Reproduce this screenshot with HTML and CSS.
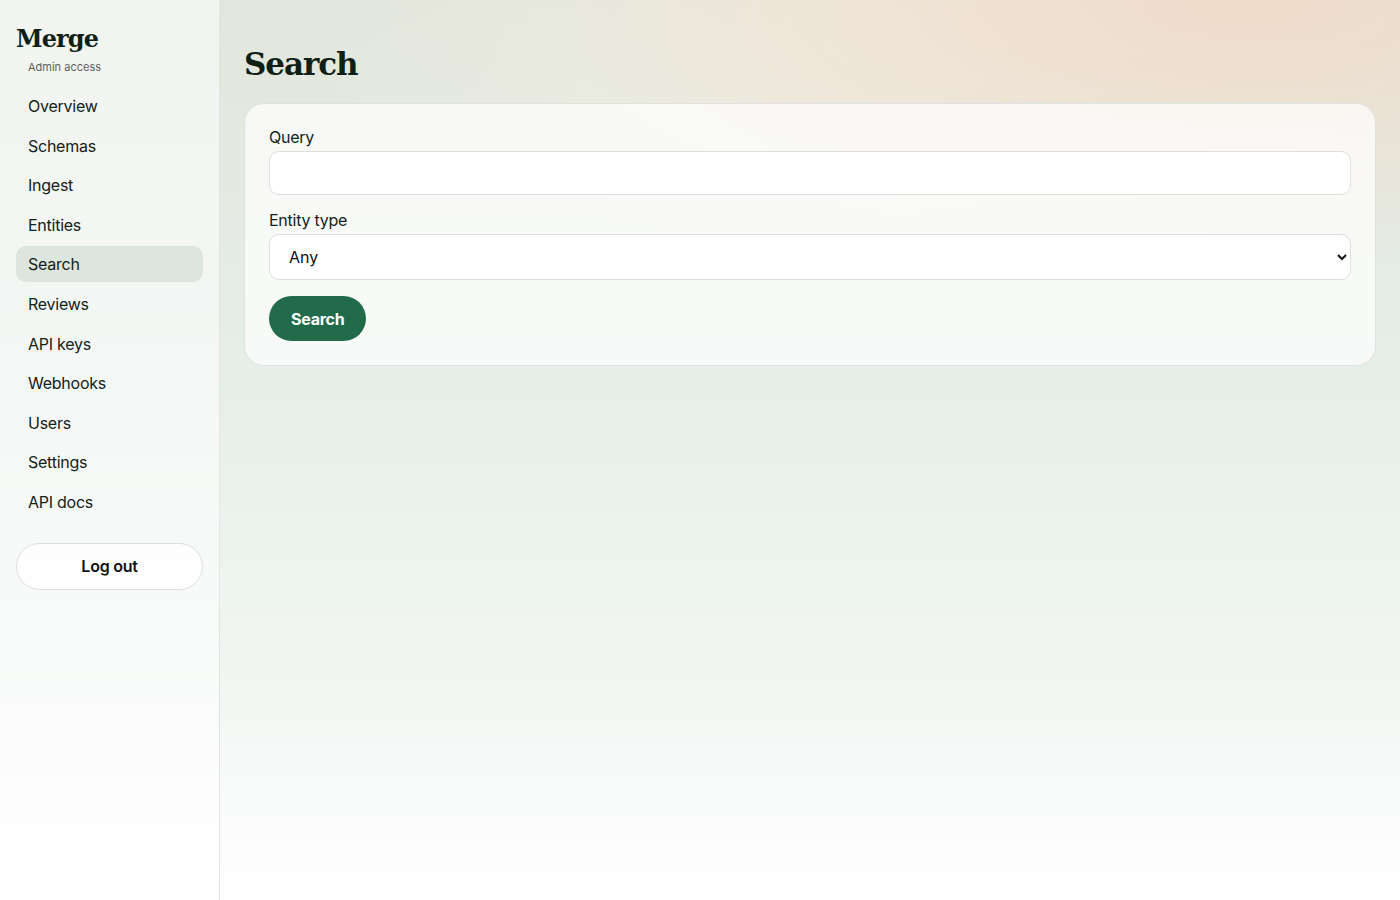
FILE: index.html
```html
<!DOCTYPE html>
<html lang="en">
    <head>
        <meta charset="UTF-8" />
        <title>Merge · Search</title>
        <link rel="stylesheet" href="styles.css">
    </head>
    <body>
        <div class="layout">
            <aside class="sidebar">
                <div class="brand">Merge</div>
                <div class="brand-sub">Admin access</div>

                <nav class="nav">
                    <a href="#">Overview</a>
                    <a href="#">Schemas</a>
                    <a href="#">Ingest</a>
                    <a href="#">Entities</a>
                    <a href="#" class="active">Search</a>
                    <a href="#">Reviews</a>
                    <a href="#">API keys</a>
                    <a href="#">Webhooks</a>
                    <a href="#">Users</a>
                    <a href="#">Settings</a>
                    <a href="#">API docs</a>
                </nav>

                <button class="logout" type="button">Log out</button>
            </aside>

            <main class="main">
                <h1>Search</h1>

                <form class="card">
                    <div class="field">
                        <label for="query">Query</label>
                        <input type="text" id="query" name="query" />
                    </div>

                    <div class="field">
                        <label for="type">Entity type</label>
                        <select id="type" name="type">
                            <option>Any</option>
                        </select>
                    </div>

                    <div>
                        <button class="primary" type="submit">Search</button>
                    </div>
                </form>
            </main>
        </div>
    </body>
</html>
```

FILE: styles.css
```css
html,
body {
    height: 100%;
}

body {
    margin: 0;
    font-family: Inter, 'Liberation Sans', sans-serif;
    font-size: 16px;
    letter-spacing: -0.25px;
    color: #142219;
    background:
        radial-gradient(ellipse 700px 260px at 1250px 0, rgba(240, 218, 200, 0.9), rgba(240, 218, 200, 0) 100%),
        radial-gradient(ellipse 600px 260px at 900px 40px, rgba(244, 238, 226, 0.8), rgba(244, 238, 226, 0) 100%),
        linear-gradient(180deg, #e2e6dc 0%, #e6eee8 40%, #f1f6f2 75%, #ffffff 100%);
}

.layout {
    display: flex;
    min-height: 100%;
}

.sidebar {
    width: 220px;
    flex-shrink: 0;
    box-sizing: border-box;
    padding: 21px 16px;
    background: rgba(255, 255, 255, 0.55);
    border-right: 1px solid #e2e5e0;
}

.brand {
    font-family: 'DejaVu Serif', 'Liberation Serif', serif;
    font-weight: 700;
    font-size: 24px;
    line-height: 35px;
    letter-spacing: -0.9px;
    color: #0f1f15;
}

.brand-sub {
    margin: 4px 0 0 12px;
    font-size: 11px;
    line-height: 14px;
    letter-spacing: 0;
    color: #5a625d;
}

.nav {
    display: flex;
    flex-direction: column;
    gap: 3.6px;
    margin-top: 14px;
}

.nav a {
    display: block;
    padding: 8px 12px;
    line-height: 20px;
    border-radius: 10px;
    color: #142219;
    text-decoration: none;
}

.nav a.active {
    background: #dce6df;
}

.logout {
    display: block;
    width: 100%;
    height: 47px;
    margin-top: 23px;
    font-family: inherit;
    font-size: 16px;
    font-weight: 600;
    letter-spacing: -0.25px;
    color: #111;
    background: rgba(255, 255, 255, 0.7);
    border: 1px solid #dcdfdc;
    border-radius: 999px;
}

.main {
    flex: 1;
    padding: 42px 24px 40px;
}

h1 {
    margin: 0 0 17px;
    font-family: 'DejaVu Serif', 'Liberation Serif', serif;
    font-weight: 700;
    font-size: 31px;
    line-height: 44px;
    letter-spacing: -1.1px;
    color: #0f1f15;
}

.card {
    display: flex;
    flex-direction: column;
    gap: 15px;
    padding: 23px 24px 24px;
    background: rgba(255, 255, 255, 0.72);
    border: 1px solid #e0e2df;
    border-radius: 20px;
}

.field label {
    display: block;
    margin-bottom: 4px;
    line-height: 20px;
}

input[type='text'],
select {
    display: block;
    width: 100%;
    box-sizing: border-box;
    font-family: inherit;
    font-size: 16px;
    color: #111;
    background: #fff;
    border: 1px solid #dedfdd;
    border-radius: 10px;
}

input[type='text'] {
    height: 44px;
    padding: 0 12px;
}

select {
    height: 46px;
    padding: 0 15px;
    margin-top: 2px;
}

.primary {
    height: 45px;
    padding: 0 22px;
    margin-top: 1px;
    font-family: inherit;
    font-size: 16px;
    font-weight: 700;
    letter-spacing: -0.25px;
    color: #fff;
    background: #216b4b;
    border: none;
    border-radius: 999px;
}
```
